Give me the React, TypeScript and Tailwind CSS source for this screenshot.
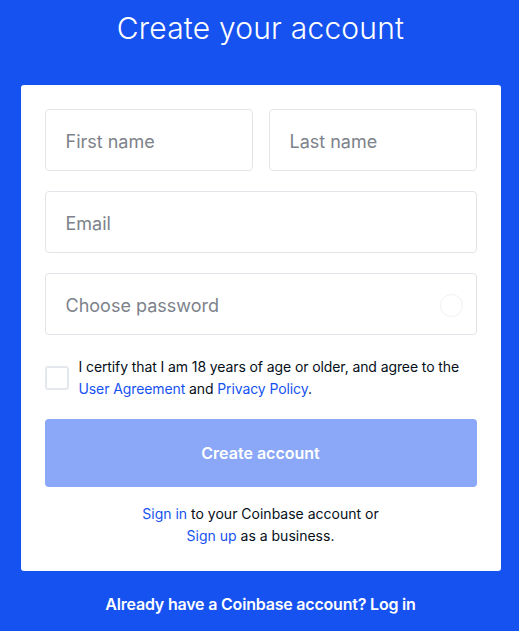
export default function App() {
  return (
    <div
      className="min-h-screen w-full bg-[#1652f0] flex flex-col items-center pl-[2px]"
      style={{ fontFamily: 'Inter, "Noto Sans", sans-serif' }}
    >
      <h1 className="pt-[10px] text-[30px] leading-[36px] font-light text-white tracking-[0.2px]">
        Create your account
      </h1>

      <div className="mt-[39px] w-[480px] rounded-[3px] bg-white px-6 pt-6 pb-[24px]">
        <div className="flex gap-4">
          <div className="flex h-[62px] flex-1 items-center rounded-[4px] border border-[#e1e5ea] px-5 pt-[2px] text-[18px] text-[#7d828b]">
            First name
          </div>
          <div className="flex h-[62px] flex-1 items-center rounded-[4px] border border-[#e1e5ea] px-5 pt-[2px] text-[18px] text-[#7d828b]">
            Last name
          </div>
        </div>
        <div className="mt-5 flex h-[62px] items-center rounded-[4px] border border-[#e1e5ea] px-5 pt-[2px] text-[18px] text-[#7d828b]">
          Email
        </div>
        <div className="mt-5 flex h-[62px] items-center justify-between rounded-[4px] border border-[#e1e5ea] pl-5 pr-[13px] pt-[2px] text-[18px] text-[#7d828b]">
          <span>Choose password</span>
          <span className="h-[23px] w-[23px] rounded-full border-[1.5px] border-[#eef0f3]" />
        </div>

        <div className="mt-[21px] flex items-center gap-[10px]">
          <span className="h-6 w-6 shrink-0 rounded-[3px] border-2 border-[#e4e8ec]" />
          <p className="text-[14px] leading-[22px] text-[#050f19] tracking-[-0.1px]">
            I certify that I am 18 years of age or older, and agree to the{' '}
            <span className="text-[#1652f0]">User Agreement</span> and{' '}
            <span className="text-[#1652f0]">Privacy Policy</span>.
          </p>
        </div>

        <button className="mt-[19px] flex h-[68px] w-full items-center justify-center rounded-[4px] bg-[#8aa8f7] text-[16px] font-semibold text-white">
          Create account
        </button>

        <p className="mt-[16px] text-center text-[14px] leading-[22px] text-[#050f19]">
          <span className="text-[#1652f0]">Sign in</span> to your Coinbase account or
          <br />
          <span className="text-[#1652f0]">Sign up</span> as a business.
        </p>
      </div>

      <p className="mt-[21px] text-[16px] font-semibold text-white tracking-[-0.2px]">
        Already have a Coinbase account? Log in
      </p>
    </div>
  );
}
